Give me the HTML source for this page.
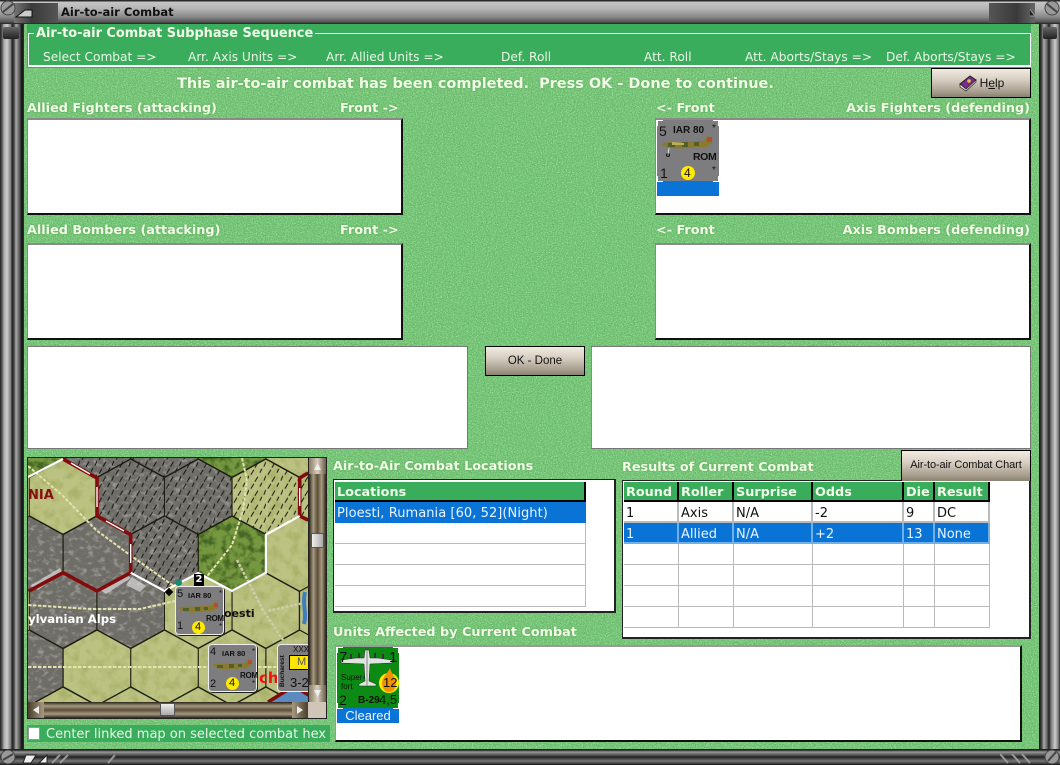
<!DOCTYPE html>
<html><head><meta charset="utf-8"><title>Air-to-air Combat</title>
<style>
html,body{margin:0;padding:0;width:1060px;height:765px;overflow:hidden;background:#777}
body{position:relative;font-family:"DejaVu Sans","Liberation Sans",sans-serif;font-size:13px}
.a{position:absolute;box-sizing:border-box}
.t{position:absolute;white-space:nowrap;line-height:16px}
.lb{position:absolute;white-space:nowrap;line-height:16px;font-weight:bold;color:#f2fbe6;font-size:12.8px;margin-top:2px;text-shadow:0 0 2px #5aa85a}
.hd{position:absolute;white-space:nowrap;line-height:16px;color:#eaf6e6;font-size:12.2px;margin-top:1px}
.box{position:absolute;box-sizing:border-box;background:#fff;border-top:2px solid #8a8a8a;border-left:1px solid #8a8a8a;border-right:2px solid #111;border-bottom:2px solid #111}
.btn{position:absolute;box-sizing:border-box;border:1px solid #000;background:linear-gradient(#f2ebe2,#d6cdc0 40%,#a89f90 80%,#8b8272);text-align:center;color:#111;font-family:"Liberation Sans",sans-serif;font-size:11.5px}
.cell{position:absolute;box-sizing:border-box;white-space:nowrap;line-height:23px;height:21px;padding-left:2px}
.h{background:#3aad5c;color:#f0fbe8;font-weight:bold;font-size:12.8px;border-bottom:2px solid #000;border-right:2px solid #000;height:20px;line-height:21px}
.r{color:#111;font-size:13px;border-right:2px solid #bbb;border-bottom:2px solid #bbb}
.s{background:#0a74d6;color:#e8f3ff;border-right:2px solid #6fb0ea;border-bottom:2px solid #6fb0ea}
.cn{position:absolute;font-family:"Liberation Sans",sans-serif;color:#111;line-height:1;white-space:nowrap}
</style></head><body>

<!-- textured background -->
<svg class="a" style="left:0;top:0" width="1060" height="765">
<filter id="n" x="0" y="0" width="100%" height="100%" color-interpolation-filters="sRGB"><feTurbulence type="fractalNoise" baseFrequency="0.8" numOctaves="2" seed="4"/><feColorMatrix values="0 0 0 0 .62  0 0 0 0 .88  0 0 0 0 .62  3.5 0 0 0 -1.6"/></filter>
<filter id="n2" x="0" y="0" width="100%" height="100%" color-interpolation-filters="sRGB"><feTurbulence type="fractalNoise" baseFrequency="0.9" numOctaves="2" seed="11"/><feColorMatrix values="0 0 0 0 .38  0 0 0 0 .70  0 0 0 0 .40  3.5 0 0 0 -1.6"/></filter>
<rect x="24" y="24" width="1016" height="726" fill="#76c577"/>
<rect x="24" y="24" width="1016" height="726" filter="url(#n)"/>
<rect x="24" y="24" width="1016" height="726" filter="url(#n2)"/>
</svg>

<!-- title bar -->
<div class="a" style="left:0;top:0;width:1060px;height:24px;background:linear-gradient(#2a2a2a 0,#2a2a2a 1px,#c6c6c6 2px,#b4b4b4 9px,#888 17px,#555 22px,#222 24px)"></div>
<div class="a" style="left:14px;top:3px;width:44px;height:20px;background:linear-gradient(90deg,#777,#3a3a3a 40%,#555)"></div>
<svg class="a" style="left:0;top:0" width="60" height="24"><circle cx="8" cy="8" r="7" fill="#999" stroke="#444"/><path d="M3 12 13 4" stroke="#444" stroke-width="2"/><path d="M16 17 25 10 32 10 32 17Z" fill="#ccc" stroke="#111"/></svg>
<div class="a" style="left:989px;top:3px;width:46px;height:20px;background:linear-gradient(90deg,#555,#3a3a3a 60%,#666)"></div>
<svg class="a" style="left:1030px;top:0" width="30" height="24"><circle cx="22" cy="8" r="7" fill="#999" stroke="#444"/><path d="M17 4 27 12" stroke="#444" stroke-width="2"/><path d="M-8 8 -1 8 5 16 -8 16Z" fill="#222" stroke="#999"/></svg>
<div class="t" style="left:61px;top:4px;font-weight:bold;font-size:11.5px;color:#111">Air-to-air Combat</div>

<!-- left frame -->
<div class="a" style="left:0;top:24px;width:24px;height:726px;background:linear-gradient(90deg,#222 0,#555 2px,#aaa 4px,#ccc 7px,#777 11px,#222 12px,#444 14px,#aaa 16px,#666 19px,#111 22px,#333 24px)"></div>
<div class="a" style="left:3px;top:27px;width:16px;height:12px;background:linear-gradient(#666,#222);border-radius:2px"></div>
<div class="a" style="left:1039px;top:24px;width:21px;height:726px;background:linear-gradient(90deg,#111 0,#333 2px,#aaa 5px,#666 8px,#222 10px,#777 12px,#ccc 16px,#888 19px,#333 21px)"></div>
<div class="a" style="left:1043px;top:27px;width:14px;height:12px;background:linear-gradient(#666,#222);border-radius:2px"></div>

<!-- bottom frame -->
<div class="a" style="left:0;top:749px;width:1060px;height:16px;background:linear-gradient(#222 0,#222 1px,#999 3px,#555 6px,#222 8px,#777 12px,#333 15px,#111 16px)"></div>
<svg class="a" style="left:0;top:745px" width="120" height="20"><circle cx="8" cy="12" r="7" fill="#999" stroke="#444"/><path d="M3 15 13 9" stroke="#444" stroke-width="2"/><path d="M23 18 26 10 36 10 31 18Z M39 18 47 10 47 18Z" fill="#eee" stroke="#222"/><path d="M52 18 60 10M60 18 68 10M108 18 115 10" stroke="#999" stroke-width="2"/></svg>
<svg class="a" style="left:1000px;top:745px" width="60" height="20"><circle cx="52" cy="12" r="7" fill="#999" stroke="#444"/><path d="M48 16 56 7" stroke="#444" stroke-width="2"/><path d="M0 9 8 18M12 9 20 18M22 9 30 18" stroke="#999" stroke-width="2"/></svg>

<!-- header sequence -->
<div class="a" style="left:27px;top:24px;width:1004px;height:44px;background:#3aad5c"></div>
<div class="a" style="left:28px;top:33px;width:1003px;height:34px;border:1px solid #fff;border-bottom-width:2px"></div>
<div class="t" style="left:34px;top:26px;background:#3aad5c;padding:0 2px;font-weight:bold;color:#f0fbe8;font-size:12.9px">Air-to-air Combat Subphase Sequence</div>
<div class="hd" style="left:43px;top:48px">Select Combat =&gt;</div>
<div class="hd" style="left:188px;top:48px">Arr. Axis Units =&gt;</div>
<div class="hd" style="left:326px;top:48px">Arr. Allied Units =&gt;</div>
<div class="hd" style="left:501px;top:48px">Def. Roll</div>
<div class="hd" style="left:644px;top:48px">Att. Roll</div>
<div class="hd" style="left:745px;top:48px">Att. Aborts/Stays =&gt;</div>
<div class="hd" style="left:886px;top:48px">Def. Aborts/Stays =&gt;</div>

<div class="lb" style="left:177px;top:73px;font-size:14.46px;line-height:18px">This air-to-air combat has been completed.&nbsp; Press OK - Done to continue.</div>

<div class="btn" style="left:931px;top:68px;width:100px;height:30px;line-height:28px;padding-left:22px;font-size:12px">H<span style="text-decoration:underline">e</span>lp</div>
<svg class="a" style="left:958px;top:74px" width="20" height="18"><path d="M2 10 12 2 18 6 8 16Z" fill="#7a2a8a" stroke="#222"/><path d="M2 10 2 13 8 17 18 8 18 6 8 15Z" fill="#e8e0d0" stroke="#222" stroke-width=".7"/><circle cx="11" cy="7" r="1.8" fill="#e8c040"/></svg>

<div class="lb" style="left:27px;top:99px">Allied Fighters (attacking)</div>
<div class="lb" style="left:340px;top:99px">Front -&gt;</div>
<div class="lb" style="left:656px;top:99px">&lt;- Front</div>
<div class="lb" style="right:30px;top:99px">Axis Fighters (defending)</div>
<div class="box" style="left:27px;top:118px;width:376px;height:97px"></div>
<div class="box" style="left:655px;top:118px;width:376px;height:97px"></div>

<!-- IAR counter -->
<div class="a" style="left:657px;top:120px;width:62px;height:76px;background:#0a74d6"></div>
<div class="a" style="left:657px;top:120px;width:62px;height:61px;background:#7d7d7f;border-radius:3px"></div>
<svg class="a" style="left:657px;top:120px" width="62" height="62"><path d="M.5 6V.5H6M56 .5H61.500V6M.5 56V61.500H6M56 61.500H61.500V56" fill="none" stroke="#fff"/></svg>
<div class="cn" style="left:659px;top:124px;font-size:14px">5</div>
<div class="cn" style="left:673px;top:126px;font-size:10px;font-weight:bold">IAR 80</div>
<div class="cn" style="left:712px;top:124px;font-size:10px">*</div>
<svg class="a" style="left:660px;top:134px" width="54" height="24"><path d="M1 10C10 6 20 9 30 7L44 7 47 2 52 3 52 9 46 13 30 14C20 15 8 15 1 10Z" fill="#8a7a30"/><path d="M8 9h7v4H8zM22 8h6v5h-6zM34 8h5v4h-5z" fill="#4f6028"/><path d="M47 3h5v5h-5z" fill="#b0502a"/><path d="M12 8 24 9 24 11 12 11Z" fill="#bcae5e"/><circle cx="8" cy="21" r="1.5" fill="none" stroke="#111"/><path d="M9 14 8 20" stroke="#ddd"/></svg>
<div class="cn" style="left:693px;top:152px;font-size:10.5px;font-weight:bold;letter-spacing:-.4px">ROM</div>
<div class="cn" style="left:660px;top:166px;font-size:14px">1</div>
<div class="a" style="left:681px;top:166px;width:14px;height:14px;border-radius:50%;background:#ffea00"></div>
<div class="cn" style="left:684px;top:167px;font-size:12px">4</div>
<div class="cn" style="left:712px;top:166px;font-size:10px">*</div>

<div class="lb" style="left:27px;top:221px">Allied Bombers (attacking)</div>
<div class="lb" style="left:340px;top:221px">Front -&gt;</div>
<div class="lb" style="left:656px;top:221px">&lt;- Front</div>
<div class="lb" style="right:30px;top:221px">Axis Bombers (defending)</div>
<div class="box" style="left:27px;top:243px;width:376px;height:97px"></div>
<div class="box" style="left:655px;top:243px;width:376px;height:97px"></div>

<div class="box" style="left:27px;top:346px;width:441px;height:103px;border-right:1px solid #777;border-bottom:1px solid #777;border-top:1px solid #777"></div>
<div class="box" style="left:591px;top:346px;width:440px;height:103px;border-right:1px solid #777;border-bottom:1px solid #777;border-top:1px solid #777"></div>
<div class="btn" style="left:485px;top:346px;width:100px;height:30px;line-height:28px">OK - Done</div>

<!-- map -->
<div class="a" style="left:27px;top:457px;width:300px;height:262px;background:#222"></div>
<svg class="a" style="left:28px;top:458px" width="280" height="244" viewBox="28 458 280 244">
<defs>
<polygon id="h" points="0,-37.500 33.750,-19 33.750,19 0,37.500 -33.750,19 -33.750,-19"/>
<filter id="gr" x="0" y="0" width="100%" height="100%" color-interpolation-filters="sRGB"><feTurbulence type="fractalNoise" baseFrequency="0.16 0.22" numOctaves="4" seed="7"/><feColorMatrix values="0 0 0 0 .78  0 0 0 0 .78  0 0 0 0 .76  3 0 0 0 -1.500"/></filter>
<filter id="pl" x="0" y="0" width="100%" height="100%" color-interpolation-filters="sRGB"><feTurbulence type="fractalNoise" baseFrequency="0.1" numOctaves="3" seed="3"/><feColorMatrix values="0 0 0 0 .62  0 0 0 0 .66  0 0 0 0 .36  3 0 0 0 -1.300"/></filter>
<filter id="fo" x="0" y="0" width="100%" height="100%" color-interpolation-filters="sRGB"><feTurbulence type="fractalNoise" baseFrequency="0.13" numOctaves="3" seed="5"/><feColorMatrix values="0 0 0 0 .27  0 0 0 0 .4  0 0 0 0 .14  3.5 0 0 0 -1.500"/></filter>
<pattern id="tk" width="17" height="14" patternUnits="userSpaceOnUse"><path d="M2 6 5 1M11 4 13 0M6 13 9 8M15 12 17 7" stroke="#111" stroke-width="1" fill="none"/></pattern>
<clipPath id="cg">
<use href="#h" x="97" y="439.700"/><use href="#h" x="164.500" y="439.700"/>
<use href="#h" x="130.700" y="496.700"/><use href="#h" x="198.200" y="496.700"/>
<use href="#h" x="29.200" y="553.700"/><use href="#h" x="97" y="553.700"/><use href="#h" x="164.500" y="553.700"/>
<use href="#h" x="63" y="610.700"/><use href="#h" x="130.700" y="610.700"/>
<use href="#h" x="29.200" y="667.700"/>
</clipPath>
<clipPath id="cf"><use href="#h" x="232" y="553.700"/><use href="#h" x="232" y="439.700"/><use href="#h" x="29.200" y="439.700"/></clipPath>
</defs>
<rect x="28" y="458" width="280" height="244" fill="#bcc282"/>
<rect x="28" y="458" width="280" height="244" filter="url(#pl)" opacity=".6"/>
<!-- mountain hexes -->
<g clip-path="url(#cg)"><rect x="28" y="458" width="280" height="244" fill="#6e6d67"/><rect x="28" y="458" width="280" height="244" filter="url(#gr)" opacity=".55"/></g>
<!-- forest hexes -->
<g clip-path="url(#cf)"><rect x="28" y="400" width="280" height="200" fill="#75973f"/><rect x="28" y="458" width="280" height="200" filter="url(#fo)"/></g>
<!-- snow -->
<path d="M30 586 60 568 62 572 38 590ZM100 590 126 574 131 578 106 594ZM132 577 146 586 140 592 126 585Z" fill="#eee" opacity=".6"/>
<!-- ticks -->
<use href="#h" x="97" y="439.700" fill="url(#tk)"/><use href="#h" x="164.500" y="439.700" fill="url(#tk)"/>
<use href="#h" x="130.700" y="496.700" fill="url(#tk)"/><use href="#h" x="198.200" y="496.700" fill="url(#tk)"/>
<use href="#h" x="164.500" y="553.700" fill="url(#tk)"/>
<use href="#h" x="265.900" y="496.700" fill="url(#tk)"/><use href="#h" x="333" y="496.700" fill="url(#tk)"/>
<!-- hex grid -->
<g fill="none" stroke="#1c1c10" stroke-width=".9">
<use href="#h" x="29.200" y="439.700"/><use href="#h" x="97" y="439.700"/><use href="#h" x="164.500" y="439.700"/><use href="#h" x="232" y="439.700"/><use href="#h" x="299.700" y="439.700"/>
<use href="#h" x="63" y="496.700"/><use href="#h" x="130.700" y="496.700"/><use href="#h" x="198.200" y="496.700"/><use href="#h" x="265.900" y="496.700"/><use href="#h" x="333" y="496.700"/>
<use href="#h" x="29.200" y="553.700"/><use href="#h" x="97" y="553.700"/><use href="#h" x="164.500" y="553.700"/><use href="#h" x="232" y="553.700"/><use href="#h" x="299.700" y="553.700"/>
<use href="#h" x="63" y="610.700"/><use href="#h" x="130.700" y="610.700"/><use href="#h" x="198.200" y="610.700"/><use href="#h" x="265.900" y="610.700"/><use href="#h" x="333" y="610.700"/>
<use href="#h" x="29.200" y="667.700"/><use href="#h" x="97" y="667.700"/><use href="#h" x="164.500" y="667.700"/><use href="#h" x="232" y="667.700"/><use href="#h" x="299.700" y="667.700"/>
<use href="#h" x="63" y="724.700"/><use href="#h" x="130.700" y="724.700"/><use href="#h" x="198.200" y="724.700"/><use href="#h" x="265.900" y="724.700"/>
</g>
<!-- roads -->
<g fill="none" stroke="#e4e2ae" stroke-width="2" stroke-dasharray="3.500 1.500">
<path d="M28 466 62 495 96 530 130 555 175 587M28 605 90 609 140 609 175 601M28 667H308M242 458 247 480 243 510 232 545 200 585"/>
</g>
<g fill="none" stroke="#cfcdae" stroke-width="2.400" stroke-dasharray="3 1.500"><path d="M237 560 263 610 283 640M268 611 308 602"/></g>
<!-- river -->
<path d="M305 592C302 605 307 612 304 624" stroke="#3f7cc0" stroke-width="4" fill="none"/>
<!-- borders -->
<path d="M63 459 97 478 97 516 130.700 534.700 130.700 572.700 97 591 63 572.700 29 591" fill="none" stroke="#830b0b" stroke-width="3.600"/>
<path d="M308 473 299.700 478 299.700 516 308 520" fill="none" stroke="#830b0b" stroke-width="3.600"/>
<path d="M28 477 63 459M130.700 572.700 164.500 591 198.200 573 232 591 265.900 572.700 265.900 534.700 299.700 516" fill="none" stroke="#fff" stroke-width="2.200"/>
<path d="M71 463 90 474M97 487 97 507M106 521 124 531M130.700 544 130.700 563M299.700 488 299.700 506" stroke="#fff" stroke-width="1.400" fill="none"/>
<path d="M268 702 294 686 320 702" fill="#5a8ac0" stroke="#830b0b" stroke-width="3.600"/>
</svg>
<div class="a" style="left:28px;top:458px;width:280px;height:244px;overflow:hidden">
<div class="t" style="left:0;top:30px;color:#8a0d0d;font-weight:bold;font-size:13px">NIA</div>
<div class="t" style="left:0;top:153px;color:#fff;font-weight:bold;font-size:11.700px">ylvanian Alps</div>
<div class="t" style="left:196px;top:148px;color:#111;font-weight:bold;font-size:11px">oesti</div>
<div class="t" style="left:231px;top:212px;color:#f01010;font-weight:bold;font-size:15px">ch</div>
<!-- small marks -->
<div class="a" style="left:147px;top:121px;width:7px;height:7px;border-radius:50%;background:#1d8a70"></div>
<div class="a" style="left:166px;top:116px;width:10px;height:12px;background:#000;color:#fff;font-size:10px;font-weight:bold;text-align:center;line-height:12px">2</div>
<div class="a" style="left:138px;top:131px;width:6px;height:6px;background:#000;transform:rotate(45deg)"></div>
<!-- counter 1 -->
<div class="a" style="left:147px;top:128px;width:49px;height:49px;background:#7d7d7f;border-radius:4px;border:1px solid #eee;box-shadow:1px 1px 0 #222"></div>
<div class="cn" style="left:149px;top:131px;font-size:11px">5</div>
<div class="cn" style="left:160px;top:134px;font-size:7.500px;font-weight:bold">IAR 80</div>
<div class="cn" style="left:191px;top:132px;font-size:8px">*</div>
<svg class="a" style="left:149px;top:143px" width="44" height="20"><path d="M1 7C8 4 16 7 24 5L34 5 37 1 41 2 41 7 36 10 24 11C16 12 6 12 1 7Z" fill="#8a7a30"/><path d="M6 7h6v3H6zM18 6h5v4h-5zM27 6h4v3h-4z" fill="#4f6028"/><path d="M37 2h4v4h-4z" fill="#b0502a"/></svg>
<div class="cn" style="left:178px;top:157px;font-size:8px;font-weight:bold;letter-spacing:-.3px">ROM</div>
<div class="cn" style="left:149px;top:163px;font-size:11px">1</div>
<div class="a" style="left:164px;top:163px;width:13px;height:13px;border-radius:50%;background:#ffea00"></div>
<div class="cn" style="left:167px;top:164px;font-size:11px">4</div>
<div class="cn" style="left:191px;top:165px;font-size:8px">*</div>
<!-- counter 2 -->
<div class="a" style="left:180px;top:186px;width:49px;height:48px;background:#7d7d7f;border-radius:4px;border:1px solid #eee;box-shadow:1px 1px 0 #222"></div>
<div class="cn" style="left:182px;top:189px;font-size:11px">4</div>
<div class="cn" style="left:194px;top:192px;font-size:7.500px;font-weight:bold">IAR 80</div>
<div class="cn" style="left:224px;top:190px;font-size:8px">*</div>
<svg class="a" style="left:183px;top:200px" width="44" height="20"><path d="M1 7C8 4 16 7 24 5L34 5 37 1 41 2 41 7 36 10 24 11C16 12 6 12 1 7Z" fill="#8a7a30"/><path d="M6 7h6v3H6zM18 6h5v4h-5zM27 6h4v3h-4z" fill="#4f6028"/><path d="M37 2h4v4h-4z" fill="#b0502a"/></svg>
<div class="cn" style="left:212px;top:214px;font-size:8px;font-weight:bold;letter-spacing:-.3px">ROM</div>
<div class="cn" style="left:182px;top:221px;font-size:11px">2</div>
<div class="a" style="left:198px;top:219px;width:13px;height:13px;border-radius:50%;background:#ffea00"></div>
<div class="cn" style="left:201px;top:220px;font-size:11px">4</div>
<div class="cn" style="left:224px;top:222px;font-size:8px">*</div>
<!-- counter 3 -->
<div class="a" style="left:249px;top:186px;width:40px;height:48px;background:#7d7d7f;border-radius:4px;border:1px solid #eee"></div>
<div class="a" style="left:261px;top:197px;width:24px;height:15px;background:#ffe600;border:1px solid #000"></div>
<div class="cn" style="left:269px;top:199px;font-size:11px;color:#555">M</div>
<div class="cn" style="left:265px;top:188px;font-size:8px">XXX</div>
<div class="cn" style="left:262px;top:218px;font-size:13px">3-2</div>
<div class="cn" style="left:252px;top:229px;font-size:6.500px;transform:rotate(-90deg);transform-origin:left top;font-weight:bold">Bucharest</div>
</div>

<!-- vertical scrollbar -->
<div class="a" style="left:309px;top:458px;width:17px;height:244px;background:linear-gradient(90deg,#2b2418,#a89a80 25%,#5a4e3a 50%,#a89a80 75%,#2b2418)"></div>
<div class="a" style="left:309px;top:458px;width:17px;height:16px;background:linear-gradient(90deg,#8a7a60,#d8cfc0,#6a5a44)"></div>
<div class="a" style="left:309px;top:685px;width:17px;height:17px;background:linear-gradient(90deg,#8a7a60,#d8cfc0,#6a5a44)"></div>
<svg class="a" style="left:309px;top:458px" width="17" height="244"><path d="M5 12 8.500 5 12 12Z" fill="#eee"/><path d="M5 232 8.500 239 12 232Z" fill="#eee"/></svg>
<div class="a" style="left:311px;top:533px;width:13px;height:15px;background:linear-gradient(90deg,#eee,#aaa);border:1px solid #555"></div>
<!-- horizontal scrollbar -->
<div class="a" style="left:28px;top:702px;width:280px;height:16px;background:linear-gradient(#2b2418,#a89a80 25%,#5a4e3a 50%,#a89a80 75%,#2b2418)"></div>
<div class="a" style="left:28px;top:702px;width:16px;height:16px;background:linear-gradient(90deg,#4a3e2c,#a89a80)"></div>
<div class="a" style="left:292px;top:702px;width:16px;height:16px;background:linear-gradient(90deg,#a89a80,#4a3e2c)"></div>
<svg class="a" style="left:28px;top:702px" width="280" height="16"><path d="M11 4 5 8 11 12Z" fill="#eee"/><path d="M269 4 275 8 269 12Z" fill="#eee"/></svg>
<div class="a" style="left:160px;top:703px;width:15px;height:13px;background:linear-gradient(#eee,#aaa);border:1px solid #555"></div>
<div class="a" style="left:308px;top:702px;width:18px;height:16px;background:#cfc6b8"></div>

<!-- checkbox -->
<div class="a" style="left:27px;top:725px;width:303px;height:17px;background:#3aad5c"></div>
<div class="a" style="left:28px;top:727px;width:12px;height:13px;background:#fff;border:1px solid #999"></div>
<div class="hd" style="left:46px;top:726px;font-size:13px">Center linked map on selected combat hex</div>

<!-- locations -->
<div class="lb" style="left:333px;top:457px">Air-to-Air Combat Locations</div>
<div class="a" style="left:333px;top:479px;width:283px;height:134px;background:#fff;border:1px solid #222;border-right-width:2px;border-bottom-width:2px"></div>
<div class="cell h" style="left:335px;top:482px;width:251px">Locations</div>
<div class="cell s" style="left:335px;top:502px;width:251px;font-size:13px;height:21px;border:none;padding-left:2px;letter-spacing:.06px">Ploesti, Rumania [60, 52](Night)</div>
<div class="a" style="left:335px;top:523px;width:251px;height:84px;border-right:1px solid #bbb;border-bottom:1px solid #bbb;background:repeating-linear-gradient(transparent 0,transparent 20px,#bbb 20px,#bbb 21px)"></div>

<!-- results -->
<div class="lb" style="left:622px;top:458px">Results of Current Combat</div>
<div class="a" style="left:622px;top:480px;width:409px;height:159px;background:#fff;border:1px solid #222;border-right-width:2px;border-bottom-width:2px"></div>
<div class="btn" style="left:901px;top:450px;width:130px;height:31px;line-height:29px;border-bottom:none;font-size:11px;letter-spacing:-.1px">Air-to-air Combat Chart</div>
<div class="cell h" style="left:624px;top:482px;width:55px">Round</div>
<div class="cell h" style="left:679px;top:482px;width:55px">Roller</div>
<div class="cell h" style="left:734px;top:482px;width:79px">Surprise</div>
<div class="cell h" style="left:813px;top:482px;width:91px">Odds</div>
<div class="cell h" style="left:904px;top:482px;width:31px">Die</div>
<div class="cell h" style="left:935px;top:482px;width:55px">Result</div>
<div class="cell r" style="left:624px;top:502px;width:55px">1</div>
<div class="cell r" style="left:679px;top:502px;width:55px">Axis</div>
<div class="cell r" style="left:734px;top:502px;width:79px">N/A</div>
<div class="cell r" style="left:813px;top:502px;width:91px">-2</div>
<div class="cell r" style="left:904px;top:502px;width:31px">9</div>
<div class="cell r" style="left:935px;top:502px;width:55px">DC</div>
<div class="cell r s" style="left:624px;top:523px;width:55px;color:#e8f3ff;border-color:#6fb0ea">1</div>
<div class="cell r s" style="left:679px;top:523px;width:55px;color:#e8f3ff;border-color:#6fb0ea">Allied</div>
<div class="cell r s" style="left:734px;top:523px;width:79px;color:#e8f3ff;border-color:#6fb0ea">N/A</div>
<div class="cell r s" style="left:813px;top:523px;width:91px;color:#e8f3ff;border-color:#6fb0ea">+2</div>
<div class="cell r s" style="left:904px;top:523px;width:31px;color:#e8f3ff;border-color:#6fb0ea">13</div>
<div class="cell r s" style="left:935px;top:523px;width:55px;color:#e8f3ff;border-color:#6fb0ea">None</div>
<div class="a" style="left:624px;top:544px;width:366px;height:84px;border-right:1px solid #bbb;background:repeating-linear-gradient(transparent 0,transparent 20px,#bbb 20px,#bbb 21px)"></div>
<svg class="a" style="left:624px;top:544px" width="366" height="84"><path d="M54.500 0V84M109.500 0V84M188.500 0V84M279.500 0V84M310.500 0V84" stroke="#bbb"/></svg>

<!-- units affected -->
<div class="lb" style="left:333px;top:623px">Units Affected by Current Combat</div>
<div class="box" style="left:335px;top:645px;width:687px;height:97px;border-top-color:#999;border-left-color:#999"></div>
<div class="a" style="left:337px;top:647px;width:62px;height:76px;background:#0a74d6"></div>
<div class="a" style="left:337px;top:647px;width:62px;height:61px;background:#0d8a14;border-radius:2px"></div>
<svg class="a" style="left:337px;top:647px" width="62" height="62"><path d="M.5 6V.5H6M56 .5H61.500V6M.5 56V61.500H6M56 61.500H61.500V56" fill="none" stroke="#fff"/></svg>
<svg class="a" style="left:338px;top:648px" width="60" height="60">
<path d="M3 12 18 10H26L27 2H31L32 10H40L54 12 54 15 32 16 31 33 38 36 38 38 21 38 21 36 27 33 26 16 3 15Z" fill="#dfe6df" stroke="#222" stroke-width=".5"/>
<path d="M29 2V38" stroke="#888"/>
<path d="M13 11V6M21 10V5M37 10V5M45 11V6" stroke="#333" stroke-width="2"/>
</svg>
<svg class="a" style="left:379px;top:666px" width="22" height="28"><circle cx="10" cy="17" r="10" fill="#ffea00"/><path d="M11 2C12 7 17 11 17 17 17 23 14 26 10 26 6 26 3 23 3 17 3 11 9 7 11 2Z" fill="#f39200"/></svg>
<div class="cn" style="left:339px;top:650px;font-size:15px">7</div>
<div class="cn" style="left:389px;top:650px;font-size:15px">1</div>
<div class="cn" style="left:341px;top:673px;font-size:8px;line-height:9px">Super-<br>fort</div>
<div class="cn" style="left:383px;top:676px;font-size:13px">12</div>
<div class="cn" style="left:339px;top:693px;font-size:14px">2</div>
<div class="cn" style="left:358px;top:696px;font-size:10px;font-weight:bold">B-29</div>
<div class="cn" style="left:379px;top:693px;font-size:13px">4,5</div>
<div class="a" style="left:337px;top:708px;width:62px;height:15px;color:#eef6ff;font-family:'Liberation Sans',sans-serif;font-size:13px;line-height:15px;text-align:center">Cleared</div>

</body></html>
